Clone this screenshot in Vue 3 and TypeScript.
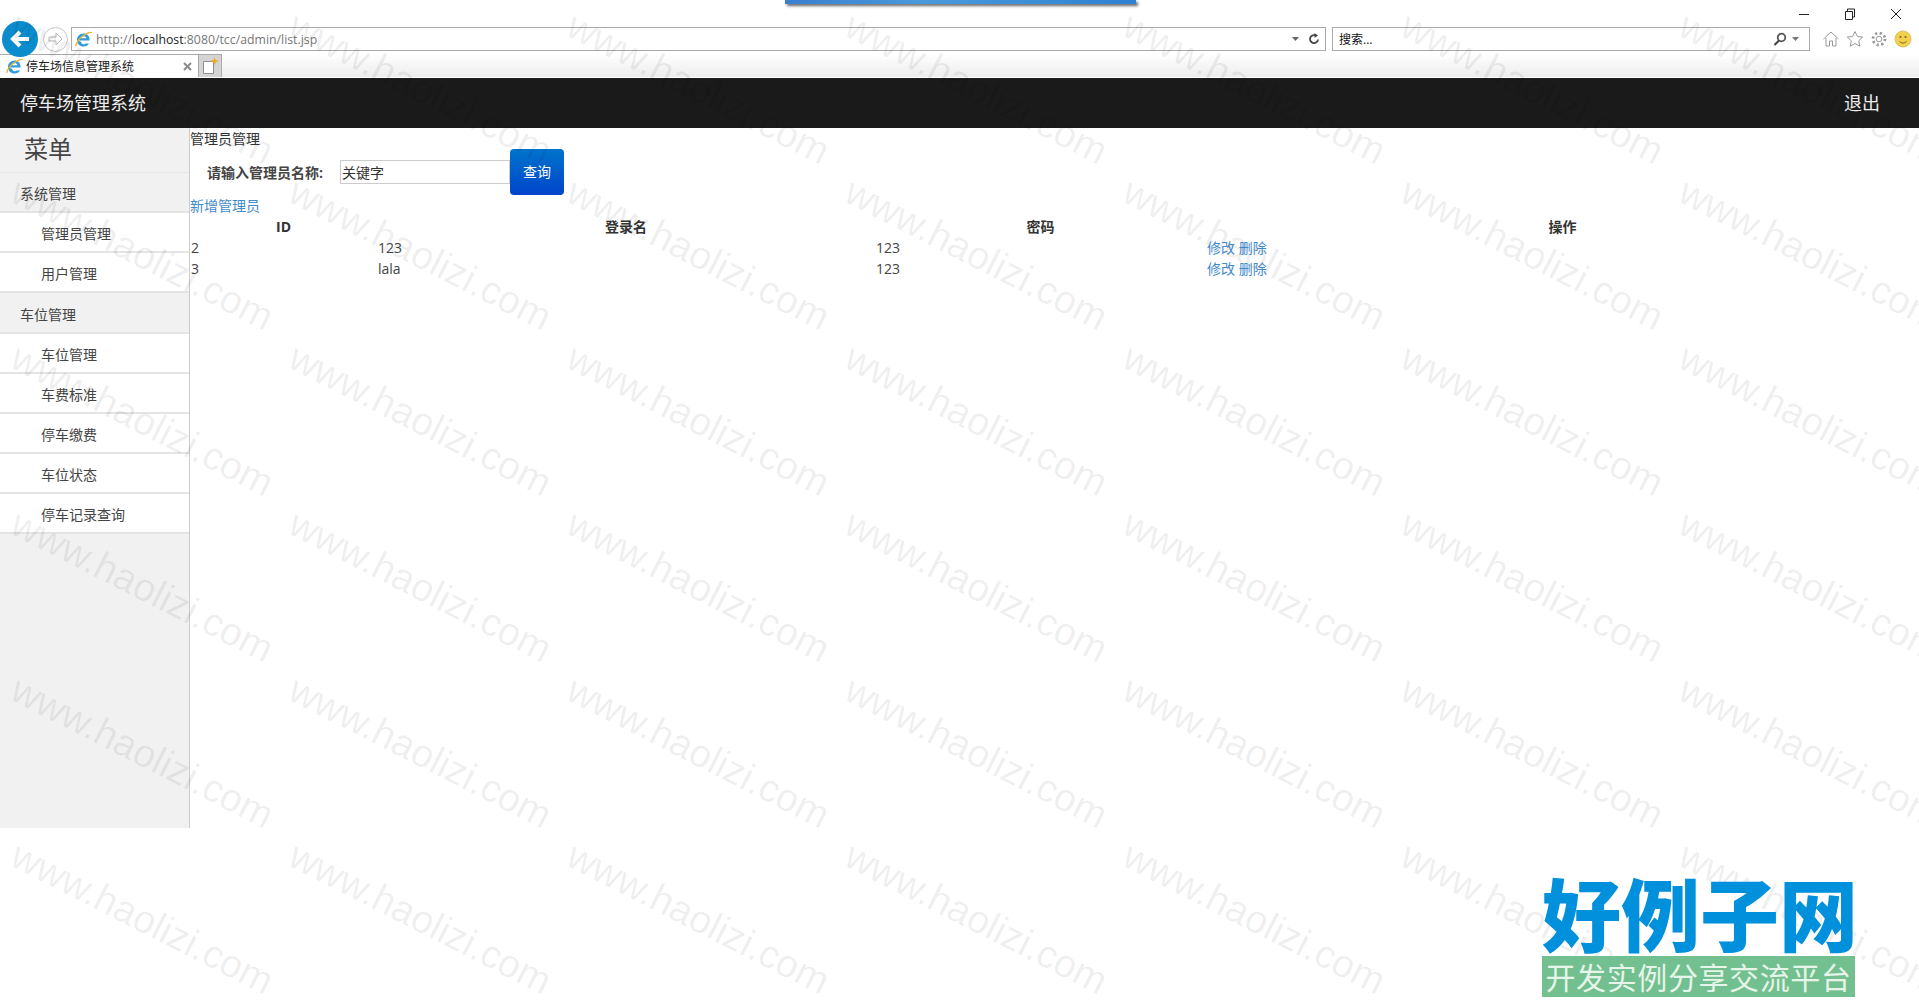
<script setup lang="ts">
interface Admin {
  id: number
  name: string
  password: string
}

const systemMenu = ['管理员管理', '用户管理']
const parkingMenu = ['车位管理', '车费标准', '停车缴费', '车位状态', '停车记录查询']

const admins: Admin[] = [
  { id: 2, name: '123', password: '123' },
  { id: 3, name: 'lala', password: '123' },
]

// tiled watermark over the whole page
const marks: { left: number; top: number }[] = []
for (let row = 0; row < 6; row++) {
  for (let col = 0; col < 7; col++) {
    marks.push({ left: 23 + col * 278, top: 5 + row * 166 })
  }
}
</script>

<template>
  <div class="page">
    <header class="browser">
      <div class="title-row">
        <div class="task-glimpse" />
        <div class="win-controls">
          <svg width="12" height="12" viewBox="0 0 12 12"><path d="M1 6.5h10" stroke="#222" fill="none" /></svg>
          <svg width="12" height="12" viewBox="0 0 12 12"><path d="M1.500 3.500h7v8h-7zM3.500 3.500v-2.500h7v8h-2" stroke="#222" fill="none" /></svg>
          <svg width="12" height="12" viewBox="0 0 12 12"><path d="M1 1l10 10M11 1L1 11" stroke="#222" fill="none" /></svg>
        </div>
      </div>
      <div class="nav-row">
        <button class="back-btn">
          <svg width="24" height="24" viewBox="0 0 24 24"><path d="M21 12H6M12 5l-7 7 7 7" stroke="#fff" stroke-width="4" fill="none" /></svg>
        </button>
        <button class="forward-btn">
          <svg width="16" height="16" viewBox="0 0 16 16"><path d="M1 6h7V2l6 6-6 6v-4H1z" stroke="#b5b5b5" fill="#fff" /></svg>
        </button>
        <div class="address-bar">
          <svg class="ie-icon" width="17" height="17" viewBox="0 0 17 17">
            <path d="M2.500 9.500h12c.4-4.500-2.500-7-6-7-4 0-6.500 3-6.500 6.500 0 4 2.800 6.500 6.500 6.500 2.500 0 4.500-1 5.500-3h-3.200c-1.300 1.500-4.300 1-4.800-1.800z" fill="#2f9be0" />
            <path d="M5.500 7.200h6c-.4-2.600-5.300-2.600-6 0z" fill="#fff" />
            <path d="M1 15c-.8-2.500 4-8.500 9-11.500 3-1.800 6-2.800 6.500-1.500" stroke="#eeb422" stroke-width="1.300" fill="none" />
          </svg>
          <span class="url">http://<b>localhost</b>:8080/tcc/admin/list.jsp</span>
          <svg class="mini-arrow" width="7" height="4" viewBox="0 0 7 4"><path d="M0 0h7L3.500 4z" fill="#666" /></svg>
          <svg width="12" height="12" viewBox="0 0 12 12"><path d="M10 6.500A4 4 0 1 1 7 2.200" stroke="#444" stroke-width="1.800" fill="none" /><path d="M6.500 0v5L10 2.500z" fill="#444" /></svg>
        </div>
        <div class="search-bar">
          <span class="search-text">搜索...</span>
          <svg width="14" height="14" viewBox="0 0 14 14"><circle cx="8.500" cy="5.500" r="3.800" stroke="#555" stroke-width="1.800" fill="none" /><path d="M6 8.500L1.500 13" stroke="#444" stroke-width="2.200" /></svg>
          <svg class="mini-arrow" width="7" height="4" viewBox="0 0 7 4"><path d="M0 0h7L3.500 4z" fill="#777" /></svg>
        </div>
        <div class="tool-icons">
          <svg width="18" height="18" viewBox="0 0 18 18"><path d="M1.500 9L9 2l7.500 7M4 8v8h3.500v-5h3v5H14V8" stroke="#9a9a9a" fill="#fff" /></svg>
          <svg width="18" height="18" viewBox="0 0 18 18"><path d="M9 1.500l2.300 5 5.400.6-4 3.700 1.100 5.400L9 13.500l-4.800 2.700 1.100-5.400-4-3.700 5.400-.6z" stroke="#9a9a9a" fill="#fff" /></svg>
          <svg width="18" height="18" viewBox="0 0 18 18"><circle cx="9" cy="9" r="2.800" stroke="#9a9a9a" fill="none" /><circle cx="9" cy="9" r="6" stroke="#9a9a9a" stroke-width="2.800" stroke-dasharray="2.200 2.500" fill="none" /></svg>
          <svg width="18" height="18" viewBox="0 0 18 18"><circle cx="9" cy="9" r="8" fill="#f2d04e" stroke="#d8c26a" /><circle cx="6.500" cy="7" r="1.100" fill="#7a6a20" /><circle cx="11.500" cy="7" r="1.100" fill="#7a6a20" /><path d="M5.500 11.500c2 2 5 2 7 0" stroke="#7a6a20" fill="none" /></svg>
        </div>
      </div>
      <div class="tab-row">
        <div class="tab">
          <svg class="ie-icon" width="17" height="17" viewBox="0 0 17 17">
            <path d="M2.500 9.500h12c.4-4.500-2.500-7-6-7-4 0-6.500 3-6.500 6.500 0 4 2.800 6.500 6.500 6.500 2.500 0 4.500-1 5.500-3h-3.200c-1.300 1.500-4.300 1-4.800-1.800z" fill="#2f9be0" />
            <path d="M5.500 7.200h6c-.4-2.600-5.300-2.600-6 0z" fill="#fff" />
            <path d="M1 15c-.8-2.500 4-8.500 9-11.500 3-1.800 6-2.800 6.500-1.500" stroke="#eeb422" stroke-width="1.300" fill="none" />
          </svg>
          <span class="tab-title">停车场信息管理系统</span>
          <svg class="tab-close" width="9" height="9" viewBox="0 0 9 9"><path d="M1 1l7 7M8 1L1 8" stroke="#8a8a8a" stroke-width="2" fill="none" /></svg>
        </div>
        <div class="new-tab">
          <svg width="17" height="18" viewBox="0 0 17 18"><path d="M.5 4.500h10v12H.5z" stroke="#8f8f8f" fill="#fff" /><path d="M11.500 0l1.100 3 3 1.100-3 1.100-1.100 3-1.100-3-3-1.100 3-1.100z" fill="#f5a623" /></svg>
        </div>
      </div>
    </header>

    <div class="topbar">
      <span class="brand">停车场管理系统</span>
      <span class="logout">退出</span>
    </div>

    <div class="main">
      <aside class="sidebar">
        <div class="menu-title">菜单</div>
        <div class="menu-section">系统管理</div>
        <div v-for="item in systemMenu" :key="item" class="menu-item">{{ item }}</div>
        <div class="menu-section">车位管理</div>
        <div v-for="item in parkingMenu" :key="item" class="menu-item">{{ item }}</div>
      </aside>

      <section class="content">
        <div class="crumb">管理员管理</div>
        <form class="search-form" @submit.prevent>
          <label class="search-label">请输入管理员名称:</label>
          <input class="search-input" value="关键字" />
          <button class="search-btn">查询</button>
        </form>
        <a class="link add-link">新增管理员</a>
        <table class="grid">
          <thead>
            <tr>
              <th class="col-id">ID</th>
              <th class="col-name">登录名</th>
              <th class="col-pass">密码</th>
              <th>操作</th>
            </tr>
          </thead>
          <tbody>
            <tr v-for="row in admins" :key="row.id">
              <td>{{ row.id }}</td>
              <td>{{ row.name }}</td>
              <td>{{ row.password }}</td>
              <td><a class="link">修改</a> <a class="link">删除</a></td>
            </tr>
          </tbody>
        </table>
      </section>
    </div>

    <div class="watermarks">
      <span
        v-for="(m, i) in marks"
        :key="i"
        class="mark"
        :style="{ left: m.left + 'px', top: m.top + 'px' }"
      >www.haolizi.com</span>
    </div>

    <div class="site-logo">
      <div class="logo-name">好例子网</div>
      <div class="logo-tag">开发实例分享交流平台</div>
    </div>
  </div>
</template>

<style scoped>
.page {
  position: relative;
  height: 1007px;
  overflow: hidden;
  background: #fff;
  color: #333;
  font-family: "Open Sans", "Noto Sans CJK SC", sans-serif;
  font-size: 14px;
}

.browser {
  height: 78px;
  background: linear-gradient(to bottom, #fff 0, #fff 54px, #ececec 77px, #fff 77px);
}

.title-row {
  height: 27px;
  display: flex;
  justify-content: flex-end;
  position: relative;
}

.task-glimpse {
  position: absolute;
  left: 785px;
  top: 0;
  width: 351px;
  height: 4px;
  background: linear-gradient(to right, #3a7fd0, #4a9ada 40%, #2f80d5);
  box-shadow: 2px 2px 3px rgba(0, 0, 0, 0.6);
}

.win-controls {
  display: flex;
  gap: 34px;
  padding: 8px 17px 0 0;
}

.win-controls svg {
  width: 12px;
  height: 12px;
}

.nav-row {
  height: 24px;
  display: flex;
  align-items: center;
  position: relative;
}

.back-btn {
  width: 36px;
  height: 36px;
  margin-left: 2px;
  border: 0;
  border-radius: 50%;
  background: #0a8ccd;
  padding: 0;
  display: flex;
  align-items: center;
  justify-content: center;
  flex: none;
}

.forward-btn {
  width: 25px;
  height: 25px;
  margin-left: 5px;
  border: 1px solid #c4c4c4;
  border-radius: 50%;
  background: #fff;
  padding: 0;
  display: flex;
  align-items: center;
  justify-content: center;
  flex: none;
}

.address-bar {
  width: 1255px;
  height: 24px;
  margin-left: 3px;
  box-sizing: border-box;
  border: 1px solid #aaa;
  display: flex;
  align-items: center;
  padding: 0 5px 0 3px;
  background: #fff;
}

.ie-icon {
  flex: none;
}

.url {
  flex: 1;
  margin-left: 4px;
  font-size: 12.300px;
  color: #777;
  line-height: 24px;
  padding-top: 1px;
}

.url b {
  font-weight: 400;
  color: #222;
}

.mini-arrow {
  margin: 0 9px 0 0;
}

.search-bar {
  width: 478px;
  height: 24px;
  margin-left: 6px;
  box-sizing: border-box;
  border: 1px solid #aaa;
  display: flex;
  align-items: center;
  padding: 0 10px 0 6px;
  background: #fff;
}

.search-text {
  flex: 1;
  font-size: 12px;
  color: #111;
}

.search-bar .mini-arrow {
  margin: 0 0 0 5px;
}

.tool-icons {
  display: flex;
  gap: 6px;
  margin-left: 12px;
}

.tab-row {
  height: 23px;
  margin-top: 3px;
  display: flex;
}

.tab {
  width: 199px;
  box-sizing: border-box;
  background: #fff;
  border-top: 1px solid #aaa;
  border-right: 1px solid #aaa;
  display: flex;
  align-items: center;
  padding: 0 6px;
}

.tab-title {
  flex: 1;
  margin-left: 3px;
  font-size: 12px;
  color: #222;
  white-space: nowrap;
}

.new-tab {
  width: 23px;
  box-sizing: border-box;
  background: #d4d4d4;
  border-top: 1px solid #aaa;
  border-right: 1px solid #aaa;
  display: flex;
  align-items: center;
  justify-content: center;
  padding-left: 2px;
}

.topbar {
  height: 50px;
  background: #1a1a1a;
  color: #eee;
  font-size: 18px;
  line-height: 50px;
  display: flex;
  justify-content: space-between;
  padding: 0 39px 0 20px;
}

.main {
  display: flex;
  align-items: flex-start;
}

.sidebar {
  width: 190px;
  height: 700px;
  flex: none;
  box-sizing: border-box;
  background: #f1f1f1;
  border-right: 1px solid #ccc;
  color: #444;
}

.menu-title {
  height: 45px;
  box-sizing: border-box;
  border-bottom: 1px solid #e6e6e6;
  padding-left: 24px;
  font-size: 24px;
  line-height: 42px;
}

.menu-section {
  height: 40px;
  box-sizing: border-box;
  border-bottom: 2px solid #e4e4e4;
  padding-left: 20px;
  line-height: 41px;
}

.menu-item + .menu-section {
  height: 41px;
  line-height: 43px;
}

.menu-item {
  height: 40px;
  box-sizing: border-box;
  background: #fff;
  border-bottom: 2px solid #e4e4e4;
  padding-left: 41px;
  line-height: 41px;
}

.content {
  flex: 1;
  min-width: 0;
}

.crumb {
  height: 22px;
  line-height: 22px;
}

.search-form {
  display: flex;
  align-items: center;
  height: 46px;
  margin-top: -1px;
  padding-left: 17px;
}

.search-label {
  width: 133px;
  font-weight: 700;
  color: #444;
  white-space: nowrap;
}

.search-input {
  width: 170px;
  height: 24px;
  box-sizing: border-box;
  border: 1px solid #ccc;
  padding: 0 1px;
  font: inherit;
  color: #333;
  outline: none;
}

.search-btn {
  width: 54px;
  height: 46px;
  border: 0;
  border-radius: 4px;
  background: linear-gradient(to bottom, #0074cc, #0044cc);
  color: #fff;
  font: inherit;
  padding: 0 0 2px;
}

.link {
  color: #428bca;
}

.add-link {
  display: block;
  height: 21px;
  line-height: 21px;
}

.grid {
  width: 100%;
  border-collapse: collapse;
  table-layout: fixed;
}

.grid th,
.grid td {
  height: 21px;
  padding: 0 1px;
  line-height: 21px;
}

.grid td {
  color: #444;
}

.col-id {
  width: 185px;
}

.col-name {
  width: 496px;
}

.col-pass {
  width: 329px;
}

.watermarks {
  position: absolute;
  inset: 0;
  pointer-events: none;
}

.mark {
  position: absolute;
  font-family: "Liberation Sans", sans-serif;
  font-size: 39px;
  line-height: 40px;
  color: rgba(0, 0, 0, 0.07);
  white-space: nowrap;
  transform: rotate(27deg);
  transform-origin: 0 0;
}

.site-logo {
  position: absolute;
  left: 1542px;
  top: 868px;
  width: 313px;
  font-family: "Noto Sans CJK SC", sans-serif;
}

.logo-name {
  height: 88px;
  font-size: 79px;
  font-weight: 900;
  line-height: 88px;
  color: #0090dc;
  white-space: nowrap;
}

.logo-tag {
  height: 41px;
  background: #72c08f;
  color: #e6f4ea;
  font-size: 30px;
  line-height: 41px;
  white-space: nowrap;
  text-align: center;
  letter-spacing: 0.6px;
}
</style>
